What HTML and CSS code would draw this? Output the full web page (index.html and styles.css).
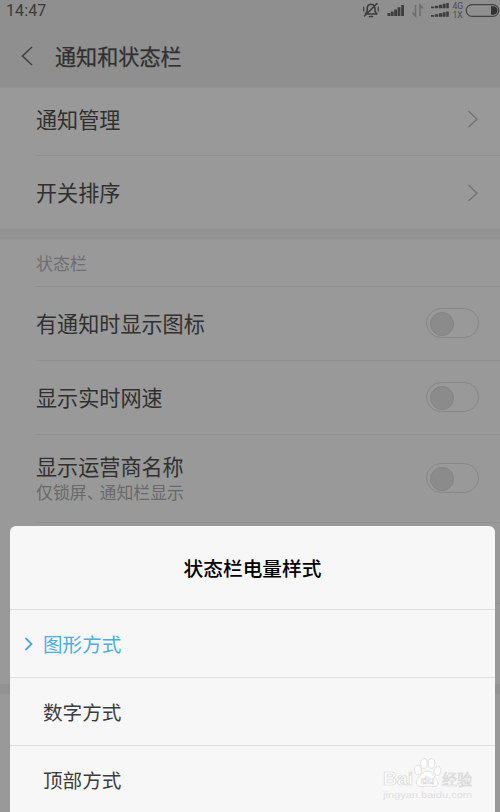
FILE: index.html
```html
<!DOCTYPE html>
<html lang="zh-CN">
<head>
<meta charset="utf-8">
<title>通知和状态栏</title>
<link rel="stylesheet" href="styles.css">
</head>
<body>
<div class="screen">
  <header class="header">
    <div class="status">
      <span class="clock">14:47</span>
      <svg class="indicators" width="140" height="22" viewBox="0 0 140 22" fill="none">
        <g stroke="#3d3d3d" stroke-width="1.6" stroke-linecap="round" stroke-linejoin="round">
          <path d="M5.5 14 7.2 11.5V8.5Q7.5 4.5 11 4.3Q14.8 4.5 15 8.5V11.5L17 14H8M9.5 16.5H12.5M17 3.5 4.5 16"/>
          <path d="M3.7 7.2V11M18.3 7.2V11" stroke-width="1.2"/>
        </g>
        <path d="M27.5 13h2.8v3h-2.8zM30.8 11.5h2.8V16h-2.8zM34.2 9.5h2.8V16h-2.8zM37.6 7.3h2.8V16h-2.8zM41.2 5h2.8v11h-2.8z" fill="#3d3d3d"/>
        <path d="M55.5 5v11l-3-3.5M60 16V5l3 3.5" stroke="#6c6c6c" stroke-width="1.5"/>
        <path d="M71 6.5h3.3v1.7h-3.3zM75 5.7h3.3v2.5h-3.3zM79 4.7h3.3v3.5h-3.3zM82.8 3.7h2.8v4.5h-2.8zM86.2 3h2.6v5.2h-2.6zM71 15h3.3v1.7h-3.3zM75 14.2h3.3v2.5h-3.3zM79 13.2h3.3v3.5h-3.3zM82.8 12.2h2.8v4.5h-2.8zM86.2 11.5h2.6v5.2h-2.6z" fill="#3d3d3d"/>
        <text x="92.5" y="8.5" class="net">4G</text>
        <text x="92.5" y="18" class="net">1X</text>
        <rect x="106.2" y="4.7" width="32.5" height="11.6" rx="5.8" stroke="#444" stroke-width="1.2"/>
        <path d="M131 6.2h2.2a4.3 4.3 0 0 1 0 8.6H131z" fill="#333"/>
      </svg>
    </div>
    <div class="titlebar">
      <svg class="back" width="14" height="22" viewBox="0 0 14 22"><path d="M12 2 2.5 11l9.5 9"/></svg>
      <h1>通知和状态栏</h1>
    </div>
  </header>
  <main>
    <section class="group">
      <div class="row first"><span>通知管理</span><svg class="chevron" width="12" height="20" viewBox="0 0 12 20"><path d="m1.5 2 8.5 8.2L1.5 18"/></svg></div>
      <div class="row"><span>开关排序</span><svg class="chevron" width="12" height="20" viewBox="0 0 12 20"><path d="m1.5 2 8.5 8.2L1.5 18"/></svg></div>
    </section>
    <section class="group settings">
      <h2>状态栏</h2>
      <div class="row"><span>有通知时显示图标</span><i class="switch"></i></div>
      <div class="row"><span>显示实时网速</span><i class="switch"></i></div>
      <div class="row tall"><div class="label"><span>显示运营商名称</span><small>仅锁屏<span class="comma">、</span>通知栏显示</small></div><i class="switch"></i></div>
      <div class="row blank"></div>
      <div class="row blank"></div>
    </section>
  </main>
  <div class="dialog">
    <h3>状态栏电量样式</h3>
    <div class="option selected"><svg width="10" height="16" viewBox="0 0 10 16"><path d="m1.5 2 6 6-6 6"/></svg><span>图形方式</span></div>
    <div class="option"><span>数字方式</span></div>
    <div class="option"><span>顶部方式</span></div>
    <svg class="watermark" width="100" height="50" viewBox="0 0 100 50">
      <g class="mark">
        <text x="3" y="29" class="brand" textLength="30" lengthAdjust="spacingAndGlyphs">Bai</text>
        <ellipse cx="38" cy="14" rx="3.4" ry="4.6" transform="rotate(-15 38 14)"/>
        <ellipse cx="44" cy="7.5" rx="3.3" ry="4.8"/>
        <ellipse cx="51.5" cy="7.5" rx="3.3" ry="4.8"/>
        <ellipse cx="57.5" cy="15" rx="3.3" ry="4.4" transform="rotate(15 57.5 15)"/>
        <path d="M47.5 15c4 0 5 4 8 7s3.5 8-1 8.500c-3 .3-4-.5-7-.5s-5 1-8 .3c-4-1-4-5.500-1-8.500s5-6.800 9-6.800z"/>
        <text x="41" y="28" class="du">du</text>
        <text x="62" y="28.5" class="cn" textLength="30" lengthAdjust="spacingAndGlyphs">经验</text>
      </g>
      <text x="3" y="42" class="url" textLength="89" lengthAdjust="spacingAndGlyphs">jingyan.baidu.com</text>
    </svg>
  </div>
</div>
</body>
</html>
```
FILE: styles.css
```css
* { box-sizing: border-box; }
body { margin: 0; background: #999; }
.screen { position: relative; width: 500px; height: 812px; overflow: hidden; background: #999; color: #303030; font-family: "Noto Sans CJK SC", sans-serif; }
h1, h2, h3 { margin: 0; font-weight: 400; }
svg { display: block; flex: none; }
.header { height: 88px; background: #8f8f8f; border-bottom: 1px solid #939393; }
.status { display: flex; justify-content: space-between; height: 22px; }
.clock { padding-left: 6px; font: 16px/22px Roboto, sans-serif; letter-spacing: .1px; color: #3b3b3b; }
.net { font: 8.5px Roboto, sans-serif; fill: #4c4c4c; }
.titlebar { display: flex; align-items: center; height: 68px; padding-left: 20px; }
.back { fill: none; stroke: #3e3e3e; stroke-width: 1.5; }
h1 { margin-left: 21px; font-size: 21.1px; line-height: 30px; color: #303030; -webkit-text-stroke: .25px #303030; }
.group { padding-left: 36px; }
.row { display: flex; align-items: center; justify-content: space-between; height: 74px; padding: 0 21px 1px 0; font-size: 21.1px; line-height: 30px; border-bottom: 1px solid #8f8f8f; }
.row.first { height: 68px; padding-bottom: 5px; }
.row:last-child { border-bottom: 0; }
.chevron { fill: none; stroke: #737373; stroke-width: 1.4; }
.group:first-child .row { height: 73px; }
.group:first-child .row.first { height: 68px; }
.group:first-child .row:last-child { padding-bottom: 0; }
.settings { border-top: 10px solid #929292; border-bottom: 10px solid #929292; }
h2 { height: 48px; font-size: 17px; line-height: 47px; color: #6e6e6e; border-bottom: 1px solid #8f8f8f; }
.switch { width: 53px; height: 30px; padding: 3px; border: 1px solid #878787; border-radius: 15px; }
.row > span { padding-bottom: 1px; }
.switch::before { content: ""; display: block; width: 22px; height: 22px; border-radius: 50%; background: #8b8b8b; border: 1px solid #848484; }
.row.tall { height: 88px; padding-bottom: 2px; }
.label { display: flex; flex-direction: column; padding-bottom: 1px; }
small { font-size: 16.9px; line-height: 22px; color: #696969; }
.comma { letter-spacing: -4px; }
.row.blank { height: 80.5px; }
.dialog { position: absolute; left: 10px; top: 526px; width: 485px; height: 300px; overflow: hidden; background: #f7f7f7; border-radius: 6px; color: #3c3c3c; }
h3 { height: 83px; font-size: 19.7px; line-height: 84px; font-weight: 500; text-align: center; color: #000; }
.option { display: flex; align-items: center; height: 68px; padding-left: 33px; border-top: 1px solid #dfdfdf; font-size: 19.6px; }
.option.selected { padding-left: 14px; color: #4aaee3; }
.selected svg { margin-right: 9px; fill: none; stroke: #45a9df; stroke-width: 1.8; }
.watermark { position: absolute; left: 370px; top: 230px; }
.mark { fill: #fff; stroke: #d6d6d6; stroke-width: .7; }
.brand { font: bold 19px "Liberation Sans", sans-serif; }
.du { font: bold 11px "Liberation Sans", sans-serif; }
.cn { font: 400 14.5px "Noto Sans CJK SC", sans-serif; }
.url { font: 9px "Liberation Sans", sans-serif; fill: #e0e0e0; }
```
